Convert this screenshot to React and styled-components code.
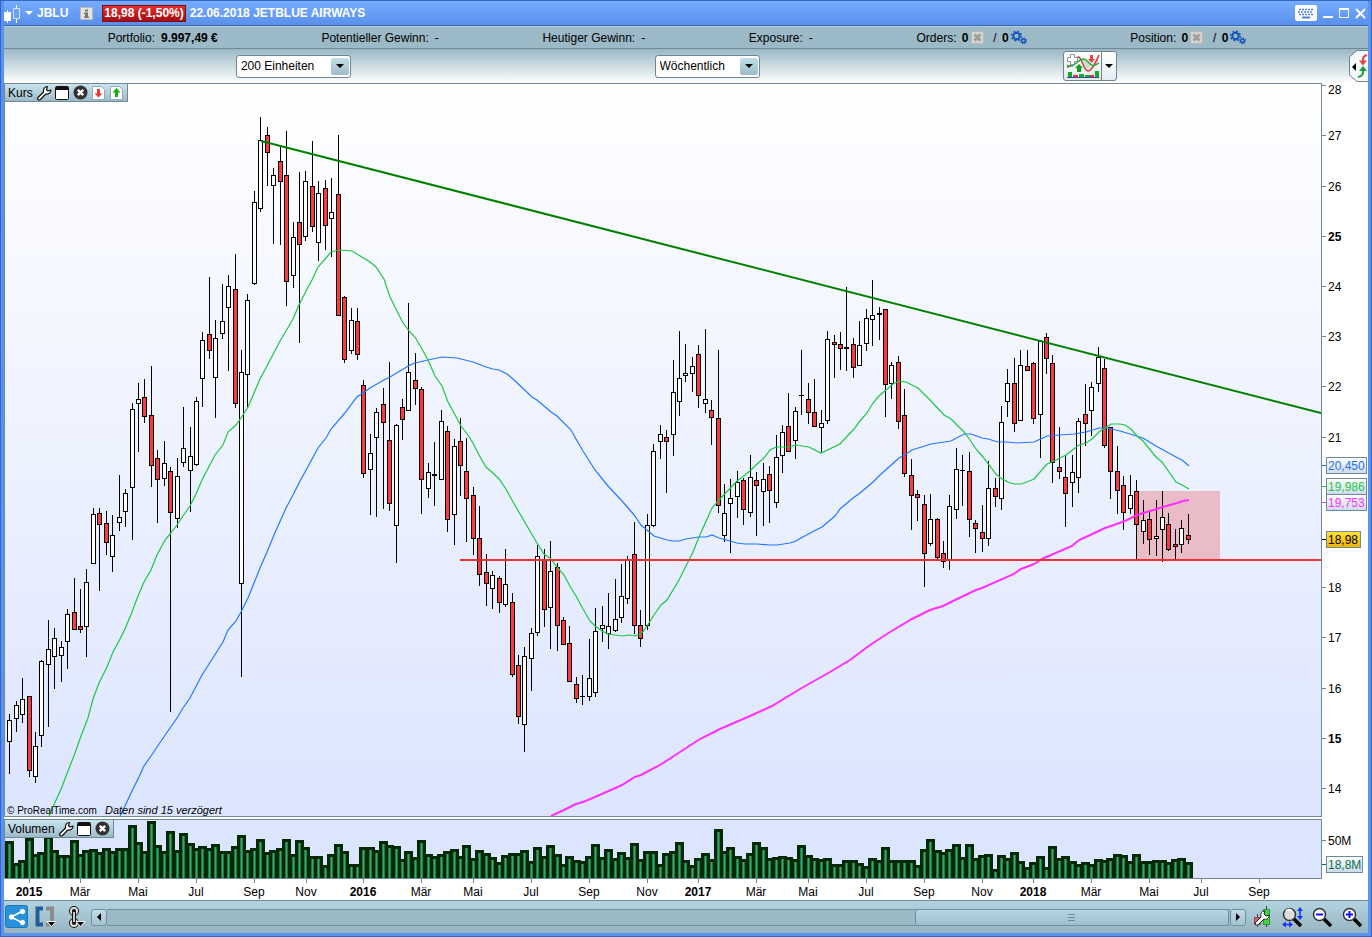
import React from 'react'
import styled, { createGlobalStyle } from 'styled-components'

const GlobalStyle = createGlobalStyle`
  body {
    margin: 0;
    font-family: "Liberation Sans", Arial, sans-serif;
    font-size: 12px;
    color: #000;
  }
  * {
    box-sizing: border-box;
  }
`

// high, body top, body bottom, low, rising (1) or falling (0)
const candles = [
  [714, 720, 742, 774, 1], [701, 705, 719, 732, 1], [678, 699, 715, 723, 1], [696, 696, 771, 777, 0],
  [732, 746, 777, 783, 1], [660, 661, 736, 747, 1], [620, 649, 665, 727, 1], [628, 638, 657, 689, 1],
  [641, 647, 656, 682, 1], [609, 614, 642, 669, 1], [578, 612, 630, 630, 0], [589, 626, 630, 633, 0],
  [569, 582, 627, 657, 1], [508, 514, 564, 564, 1], [508, 513, 525, 591, 0], [511, 523, 543, 555, 0],
  [515, 535, 557, 572, 1], [475, 517, 523, 531, 1], [489, 493, 512, 527, 1], [403, 409, 488, 540, 1],
  [383, 399, 404, 452, 1], [379, 397, 417, 423, 0], [366, 415, 466, 487, 0], [450, 458, 480, 523, 0],
  [441, 463, 479, 486, 1], [467, 471, 513, 712, 0], [458, 476, 519, 528, 1], [407, 448, 463, 467, 1],
  [427, 456, 471, 512, 1], [397, 401, 465, 466, 1], [332, 340, 379, 407, 1], [277, 334, 351, 359, 0],
  [320, 338, 378, 418, 1], [284, 321, 334, 339, 1], [275, 286, 308, 371, 1], [254, 289, 404, 408, 0],
  [350, 372, 584, 677, 1], [294, 300, 375, 407, 1], [191, 202, 284, 285, 1], [117, 140, 209, 212, 1],
  [127, 135, 153, 186, 0], [168, 175, 186, 244, 1], [146, 161, 182, 245, 0], [131, 175, 282, 306, 0],
  [222, 237, 276, 288, 1], [172, 222, 245, 343, 0], [171, 181, 237, 241, 1], [141, 186, 227, 232, 0],
  [181, 193, 243, 261, 1], [180, 188, 226, 250, 0], [178, 212, 219, 257, 1], [135, 194, 316, 316, 0],
  [296, 297, 360, 363, 0], [308, 320, 351, 354, 1], [308, 321, 355, 360, 0], [380, 385, 474, 478, 0],
  [434, 453, 470, 515, 1], [408, 412, 438, 517, 1], [388, 404, 423, 509, 0], [362, 440, 504, 511, 0],
  [424, 425, 526, 563, 1], [399, 407, 420, 440, 0], [303, 372, 411, 411, 1], [353, 380, 389, 405, 0],
  [387, 389, 480, 514, 0], [463, 472, 489, 498, 1], [442, 474, 476, 506, 1], [410, 421, 480, 480, 1],
  [426, 431, 520, 532, 0], [439, 446, 515, 545, 1], [418, 441, 466, 496, 0], [438, 471, 499, 542, 0],
  [487, 495, 539, 555, 0], [506, 538, 575, 586, 0], [554, 572, 584, 606, 0], [571, 575, 589, 609, 1],
  [576, 578, 603, 613, 0], [549, 584, 605, 607, 1], [593, 602, 675, 677, 0], [655, 665, 717, 724, 0],
  [647, 656, 725, 752, 1], [628, 633, 659, 691, 1], [545, 556, 633, 636, 1], [549, 559, 610, 627, 0],
  [541, 571, 608, 649, 1], [563, 567, 626, 651, 0], [617, 620, 645, 645, 0], [626, 643, 682, 682, 0],
  [677, 684, 699, 703, 0], [675, 696, 697, 705, 1], [639, 678, 697, 701, 1], [608, 631, 693, 697, 1],
  [606, 625, 629, 642, 1], [593, 626, 634, 649, 1], [579, 619, 631, 632, 1], [564, 596, 618, 623, 1],
  [556, 559, 599, 604, 1], [522, 554, 626, 634, 0], [610, 625, 639, 647, 0], [514, 525, 626, 630, 1],
  [444, 451, 526, 527, 1], [425, 434, 442, 459, 1], [430, 437, 442, 493, 0], [360, 392, 435, 456, 1],
  [331, 378, 402, 416, 1], [344, 373, 376, 382, 1], [357, 366, 374, 392, 1], [345, 354, 396, 408, 0],
  [329, 399, 404, 413, 1], [400, 410, 418, 445, 0], [350, 418, 506, 513, 0], [484, 513, 536, 542, 1],
  [479, 498, 504, 553, 1], [471, 482, 497, 518, 1], [478, 480, 510, 525, 0], [455, 477, 513, 517, 1],
  [472, 480, 486, 536, 0], [463, 479, 492, 526, 1], [466, 474, 491, 523, 0], [435, 457, 503, 508, 1],
  [425, 432, 456, 473, 1], [393, 426, 452, 452, 0], [407, 411, 441, 459, 1], [350, 395, 396, 415, 1],
  [383, 399, 413, 424, 0], [379, 412, 427, 427, 0], [410, 423, 428, 453, 1], [331, 339, 421, 424, 1],
  [335, 342, 345, 378, 0], [332, 344, 349, 370, 0], [287, 347, 349, 371, 1], [338, 344, 368, 378, 0],
  [321, 345, 366, 366, 1], [309, 318, 344, 351, 1], [280, 315, 320, 346, 1], [307, 313, 315, 340, 1],
  [309, 309, 385, 417, 0], [362, 365, 384, 399, 1], [356, 362, 422, 429, 0], [389, 415, 474, 477, 0],
  [459, 475, 496, 530, 0], [490, 494, 498, 521, 0], [495, 504, 554, 587, 0], [494, 519, 544, 546, 1],
  [518, 519, 558, 559, 0], [541, 553, 562, 568, 0], [495, 506, 560, 570, 1], [448, 469, 510, 519, 1],
  [455, 470, 471, 506, 1], [452, 471, 520, 537, 0], [520, 523, 529, 553, 0], [505, 532, 539, 552, 0],
  [461, 488, 539, 546, 1], [478, 488, 497, 507, 0], [406, 422, 499, 510, 1], [369, 383, 402, 417, 1],
  [358, 383, 424, 432, 0], [350, 365, 421, 421, 1], [350, 366, 371, 371, 0], [362, 363, 419, 424, 0],
  [340, 341, 415, 458, 1], [333, 337, 359, 374, 0], [355, 363, 463, 483, 0], [427, 467, 472, 479, 0],
  [455, 477, 494, 527, 0], [455, 472, 483, 507, 1], [418, 421, 478, 493, 1], [384, 414, 424, 446, 0],
  [382, 387, 411, 436, 1], [347, 357, 384, 392, 1], [359, 368, 446, 448, 0], [427, 427, 472, 499, 0],
  [446, 471, 491, 514, 0], [476, 485, 513, 530, 0], [475, 495, 509, 514, 1], [480, 491, 525, 559, 0],
  [500, 520, 532, 544, 1], [510, 519, 540, 555, 0], [500, 536, 539, 556, 1], [491, 517, 530, 562, 1],
  [513, 524, 550, 551, 0], [529, 544, 547, 559, 0], [520, 528, 545, 553, 1], [514, 535, 540, 544, 0],
]

const volumes = [
  841, 863, 860, 838, 854, 852, 836, 850, 855, 855, 840, 854, 850, 849, 852, 848, 851, 848, 848, 825,
  842, 851, 821, 845, 851, 831, 850, 833, 843, 848, 846, 848, 844, 851, 851, 846, 835, 850, 848, 839,
  852, 850, 848, 839, 854, 840, 847, 856, 856, 865, 854, 844, 851, 864, 864, 847, 847, 850, 841, 845,
  846, 859, 851, 857, 840, 854, 856, 854, 851, 849, 856, 845, 858, 850, 853, 857, 862, 855, 853, 853,
  850, 861, 847, 856, 845, 854, 864, 856, 860, 861, 856, 844, 857, 849, 858, 852, 857, 843, 859, 851,
  851, 864, 853, 851, 842, 860, 865, 858, 853, 859, 829, 851, 847, 856, 859, 853, 842, 847, 858, 857,
  856, 857, 859, 845, 855, 858, 859, 858, 864, 864, 860, 860, 863, 866, 858, 860, 847, 860, 860, 860,
  860, 865, 849, 839, 850, 852, 849, 844, 857, 844, 858, 855, 854, 869, 855, 858, 852, 861, 867, 862,
  856, 867, 846, 858, 856, 861, 864, 862, 864, 859, 860, 858, 854, 855, 861, 854, 861, 861, 860, 860,
  862, 859, 858, 862,
]

const fastAverage =
  '49,816 52,809 62,787 68,771 75,753 81,736 88,718 93,699 99,683 107,667 113,652 119,641 125,629 132,612 138,596 144,582 151,570 157,555 165,540 170,534 177,525 183,516 190,506 196,494 202,480 215,455 223,445 228,432 236,425 241,418 248,407 254,393 260,379 267,366 280,341 286,331 293,319 299,305 306,291 312,280 318,267 326,258 331,252 339,250 352,251 357,254 370,262 376,267 384,279 390,297 396,309 403,323 410,332 415,337 422,349 428,360 435,376 442,386 448,402 454,413 461,426 468,435 473,443 479,455 486,467 493,473 499,479 506,489 513,502 537,543 544,554 551,559 557,567 564,575 571,588 576,596 583,609 590,621 595,626 602,631 608,634 615,635 622,636 629,635 635,636 641,634 647,626 654,615 661,605 667,600 679,580 687,564 693,552 699,537 712,508 719,500 737,481 745,475 751,470 756,465 764,458 770,450 776,447 783,447 789,447 795,445 809,447 821,453 840,444 854,429 860,421 867,413 873,403 879,396 886,390 893,384 899,381 906,382 912,385 918,388 931,401 944,415 951,419 957,425 964,432 970,440 976,449 983,457 996,474 1002,479 1008,482 1014,484 1021,484 1027,482 1034,479 1047,464 1054,461 1066,455 1079,445 1086,443 1092,439 1099,432 1105,428 1111,424 1120,424 1125,425 1131,429 1137,436 1143,441 1156,457 1162,462 1176,482 1182,485 1189,489'

const slowAverage =
  '120,816 124,808 132,791 139,777 144,766 151,756 157,747 170,728 177,718 183,708 190,698 202,675 223,642 228,630 236,621 241,612 248,598 254,583 260,568 267,552 274,535 286,508 293,495 299,483 318,448 326,438 331,429 344,414 357,397 370,388 384,380 390,377 410,365 415,363 428,360 442,357 457,358 473,362 486,367 493,369 499,370 507,374 513,379 532,397 537,400 551,412 557,416 571,430 576,439 583,451 595,470 608,486 622,501 629,509 635,516 641,525 654,536 667,540 673,541 679,541 686,539 699,537 706,537 712,535 719,538 737,543 745,544 757,544 770,545 777,545 790,543 796,541 801,538 814,531 822,527 835,516 840,509 853,498 860,493 873,482 880,475 899,458 906,454 912,450 931,444 951,441 964,434 971,434 982,438 988,439 998,442 1007,442 1017,443 1034,442 1047,436 1060,435 1074,434 1086,432 1099,428 1107,428 1120,431 1143,438 1156,446 1176,457 1182,460 1189,466'

const longAverage =
  '551,816 564,810 576,804 583,802 595,797 622,785 635,777 641,775 660,765 680,752 700,739 720,729 750,716 772,706 800,689 830,672 850,660 870,645 890,632 912,619 930,610 943,606 955,600 976,590 982,588 1014,574 1021,569 1034,564 1042,559 1072,546 1079,540 1086,537 1105,528 1111,526 1125,521 1137,515 1150,511 1163,507 1177,503 1183,501 1189,500'

const months = [
  [29, '2015'], [80, 'Mär'], [138, 'Mai'], [196, 'Jul'], [254, 'Sep'], [306, 'Nov'],
  [363, '2016'], [421, 'Mär'], [473, 'Mai'], [531, 'Jul'], [589, 'Sep'], [647, 'Nov'],
  [698, '2017'], [756, 'Mär'], [808, 'Mai'], [866, 'Jul'], [924, 'Sep'], [982, 'Nov'],
  [1033, '2018'], [1091, 'Mär'], [1149, 'Mai'], [1201, 'Jul'], [1259, 'Sep'],
]

const prices = [28, 27, 26, 25, 24, 23, 22, 21, 18, 17, 16, 15, 14]

const barX = i => Math.floor(9.7 + 6.44 * i)
const priceY = p => Math.round(789 - (p - 14) * 50.2)

const Window = styled.main`
  display: flex;
  flex-direction: column;
  padding: 1px 4px 4px;
  background: #5a93ef;
  box-shadow: inset 0 0 0 1px #3467c2;
`

const TitleBar = styled.header`
  display: flex;
  align-items: center;
  height: 25px;
  padding-right: 2px;
  border-bottom: 1px solid #3c68b0;
  background: linear-gradient(#76adff, #5890ec);
  color: #fff;
  font-weight: bold;
  white-space: nowrap;
`

const TitleButton = styled.button`
  display: flex;
  padding: 0;
  border: 0;
  background: none;
  color: inherit;
  font: inherit;
  margin-left: ${p => p.$before || 0}px;
`

const Symbol = styled.span`
  margin-left: 4px;
`

const Change = styled.span`
  height: 17px;
  margin: 0 4px 0 9px;
  padding: 0 1px;
  border: 1px solid #7c1010;
  background: linear-gradient(#e03030, #a80c0c);
  line-height: 15px;
`

const Spacer = styled.div`
  flex: 1;
`

const StatusBar = styled.section`
  display: flex;
  justify-content: space-evenly;
  align-items: center;
  height: 23px;
  padding-right: 18px;
  border-top: 1px solid #b4ccd6;
  border-bottom: 1px solid #6f8a96;
  background: #9bb9c6;
  white-space: nowrap;
`

const StatusItem = styled.div`
  display: flex;
  align-items: center;
  gap: ${p => p.$gap || 6}px;
`

const SmallButton = styled.button`
  display: flex;
  padding: 0;
  border: 0;
  background: none;
`

const Toolbar = styled.section`
  display: flex;
  align-items: center;
  height: 34px;
  background: linear-gradient(#9ab8c4, #fff);
`

const Controls = styled.div`
  display: flex;
  flex: 1;
  justify-content: space-between;
  align-items: center;
  padding: 0 17%;
`

const SelectBox = styled.label`
  display: grid;
  grid-template-columns: 1fr 22px;
  align-items: center;
  width: ${p => p.$width}px;
  height: 23px;
`

const Select = styled.select`
  grid-area: 1 / 1 / 2 / 3;
  height: 23px;
  padding: 0 4px;
  appearance: none;
  border: 1px solid #70858f;
  border-radius: 3px;
  background: #fff;
  color: #000;
  font: inherit;
`

const SelectArrow = styled.span`
  grid-area: 1 / 2 / 2 / 3;
  display: flex;
  justify-content: center;
  align-items: center;
  width: 18px;
  height: 17px;
  margin-left: 2px;
  border-radius: 2px;
  background: linear-gradient(#c4dee8, #9dbcc9);
  pointer-events: none;
`

const SplitButton = styled.div`
  display: flex;
  height: 30px;
  border: 1px solid #70858f;
  border-radius: 3px;
  background: linear-gradient(#fff, #e4ecf0);
`

const SplitPart = styled.button`
  display: flex;
  justify-content: center;
  align-items: center;
  width: ${p => p.$width}px;
  padding: 0;
  border: 0;
  border-left: ${p => (p.$divided ? '1px solid #70858f' : '0')};
  background: none;
`

const Panel = styled.section`
  position: relative;
  background: #fff;
`

const PanelTitle = styled.div`
  position: absolute;
  top: 1px;
  left: 1px;
  display: flex;
  align-items: center;
  gap: 3px;
  height: 18px;
  padding: 0 3px;
  border-right: 1px solid #6f8a96;
  border-bottom: 1px solid #6f8a96;
  background: linear-gradient(#c9e4ef, #9dbbc7);
`

const Chart = styled.svg`
  display: block;
  width: 100%;
  height: auto;
  font-family: "Liberation Sans", Arial, sans-serif;
  font-size: 12px;
`

const Footer = styled.footer`
  display: flex;
  align-items: center;
  height: 33px;
  padding-right: 5px;
  border-top: 1px solid #6f8a96;
  background: linear-gradient(#b3d3e0, #97b5c1);
`

const FooterButton = styled.button`
  display: flex;
  padding: 0;
  border: 0;
  background: none;
  margin-left: ${p => p.$before}px;
`

const ScrollBar = styled.div`
  display: flex;
  flex: 1;
  height: 17px;
  margin-left: 5px;
`

const ScrollStep = styled.button`
  display: flex;
  justify-content: center;
  align-items: center;
  width: 16px;
  padding: 0;
  border: 1px solid #70909e;
  border-radius: 3px;
  background: linear-gradient(#c2dce7, #a3c2cf);
`

const ScrollTrack = styled.div`
  display: flex;
  justify-content: flex-end;
  flex: 1;
  border-top: 1px solid #70909e;
  border-bottom: 1px solid #70909e;
  background: #9cbac6;
`

const ScrollThumb = styled.div`
  display: flex;
  justify-content: center;
  align-items: center;
  width: 28%;
  margin-right: 1px;
  border: solid #70909e;
  border-width: 0 1px;
  border-radius: 3px;
  background: linear-gradient(#b6d6e3, #9fbfcc);
`

const Arrow = ({ d = 'M0 0h8L4 4z', w = 8, h = 4, fill = '#000' }) => (
  <svg width={w} height={h} fill={fill}><path d={d} /></svg>
)

const InfoIcon = () => (
  <svg width="13" height="13">
    <rect x="0.5" y="0.5" width="12" height="12" fill="#e4e4dc" stroke="#b4b8b8" />
    <path d="M5 2.500h3v2H5zM4 5.500h4v4h1v1.500H4V9.500h1V7H4z" fill="#777" />
  </svg>
)

const Wrench = () => (
  <svg width="16" height="16" viewBox="0 0 16 16">
    <path d="M2 12.500 7.500 7C7 4 8.500 1.500 11.500 1.500L10.500 4.500 12 6 15 5C15 8 12.500 9.500 9.800 9L4.500 14.500Q3 15.500 2 14.500T2 12.500Z" fill="#fff" stroke="#111" strokeWidth="1.2" strokeLinejoin="round" />
  </svg>
)

const WindowIcon = () => (
  <svg width="15" height="14">
    <rect x="0.5" y="0.5" width="13" height="13" rx="1" fill="#fff" stroke="#111" />
    <path d="M1 1h12v3H1z" fill="#111" />
  </svg>
)

const CloseIcon = () => (
  <svg width="15" height="15">
    <circle cx="7.5" cy="7.5" r="7" fill="#333" />
    <path d="M4.800 4.800l5.400 5.400M10.200 4.800l-5.400 5.400" stroke="#fff" strokeWidth="2.4" />
  </svg>
)

const MoveIcon = ({ up }) => (
  <svg width="15" height="14">
    <path d="M1.500 .5h9l3 3v10h-12z" fill="#fff" stroke="#8eaabb" />
    <path d={up ? 'M7.500 2l4 4.500H9V11H6V6.500H3.500z' : 'M7.500 11.500l-4-4H6V3h3v4.500h2.500z'} fill={up ? '#14b014' : '#ee3838'} />
  </svg>
)

const CancelIcon = () => (
  <svg width="14" height="14">
    <rect x="0.5" y="0.5" width="12" height="12" fill="#d4d4d0" stroke="#bbb8b4" />
    <path d="M3.500 3.500l6 6M9.500 3.500l-6 6" stroke="#a09c98" strokeWidth="3" />
  </svg>
)

const Gears = () => (
  <svg width="16" height="15" fill="none" stroke="#1555b8">
    <circle cx="5.5" cy="6" r="3.2" strokeWidth="2" />
    <circle cx="5.5" cy="6" r="4.8" strokeWidth="1.5" strokeDasharray="1.9 1.87" />
    <circle cx="12.5" cy="10.8" r="1.8" strokeWidth="1.5" />
    <circle cx="12.5" cy="10.8" r="2.9" strokeWidth="1.2" strokeDasharray="1.1 1.18" />
  </svg>
)

const CandleLogo = () => (
  <svg width="17" height="24" fill="none" stroke="#fff">
    <path d="M3.500 9v13M12.500 4v18" />
    <path d="M0 11h7v9H0z" fill="#fff" stroke="none" />
    <path d="M9.500 7.500h6v10h-6z" fill="#6ba2f8" stroke="#d4e5ff" />
  </svg>
)

const Keyboard = () => (
  <svg width="22" height="16">
    <rect width="22" height="16" rx="2" fill="#fff" />
    <path d="M4 4.500h15M3 7h15M4 9.500h15" stroke="#4d80d5" strokeWidth="1.5" strokeDasharray="2 1" />
    <path d="M7 12.500h8" stroke="#4d80d5" strokeWidth="2" />
  </svg>
)

const IndicatorIcon = () => (
  <svg width="34" height="26" fill="none">
    <path d="M12 5l4 3 5 9 4-4-5-6-4-1z" fill="#bfe6c8" />
    <path d="M24 16l8-14v9l-6 5z" fill="#f3c4c8" />
    <path d="M1 14Q4 14 7 9T13 4C17 8 18 18 22 18S30 9 33 2" stroke="#d43c3c" strokeWidth="1.5" />
    <path d="M1 12C8 17 12 5 18 6S23 17 33 10" stroke="#25ad3b" strokeWidth="1.5" />
    <path d="M4.500 1.500h4v3h3v4h-3v3h-4v-3h-3v-4h3z" fill="#fff" stroke="#8296a0" />
    <path d="M13 11l4 4h-2v4h-4v-4H9z" fill="#129c20" />
    <path d="M24 2h3v4h2l-3.500 4L22 6h2z" fill="#e44" />
    <path d="M2 24v-5h4v5zM13 24v-3h5v3zM19 24v-2h5v2zM29 24v-6h4v6z" fill="#13ab20" />
    <path d="M7 24v-2h5v2zM24 24v-2h4v2z" fill="#dd3434" />
    <path d="M1 24.500h32" stroke="#3344bb" />
  </svg>
)

const SideTab = () => (
  <svg width="19" height="32" fill="none">
    <path d="M19 .5H8L.5 7v18L8 31.500h11" fill="#f5fafc" stroke="#70858f" />
    <path d="M7 13v8l-4-4z" fill="#000" />
    <path d="M18 5q-5 1-4 7" stroke="#e44545" strokeWidth="2" />
    <path d="M10 10.500h8l-4 5z" fill="#e44545" />
    <path d="M9 27q6-1 5-7" stroke="#19a034" strokeWidth="2" />
    <path d="M10 21h8l-4-5z" fill="#19a034" />
  </svg>
)

const ShareIcon = () => (
  <svg width="24" height="24" fill="#fff" stroke="#fff">
    <rect x="0.5" y="0.5" width="22" height="22" rx="2" fill="#2791db" stroke="#1877b6" />
    <path d="M6 12l12-6M6 12l12 6" fill="none" strokeWidth="1.5" />
    <circle cx="6.5" cy="12" r="2.2" />
    <circle cx="17.5" cy="6.5" r="2.2" />
    <circle cx="17.5" cy="17.5" r="2.2" />
  </svg>
)

const BracketIcon = () => (
  <svg width="22" height="22" fill="none">
    <path d="M8 2.500H2.500v16H8" stroke="#205e99" strokeWidth="4" />
    <path d="M11 2.500h6v16h-6" stroke="#8c8c8c" strokeWidth="4" />
    <path d="M12 15.500h9l-4.500 5z" fill="#000" stroke="#fff" />
  </svg>
)

const ChainIcon = () => (
  <svg width="18" height="22" fill="none">
    <g stroke="#111" strokeWidth="4">
      <circle cx="6" cy="5" r="3" />
      <circle cx="6" cy="17" r="3" />
    </g>
    <g stroke="#ddd" strokeWidth="2">
      <circle cx="6" cy="5" r="3" />
      <circle cx="6" cy="17" r="3" />
    </g>
    <path d="M6 6v10" stroke="#111" strokeWidth="4" strokeLinecap="round" />
    <path d="M6 6v10" stroke="#ccc" strokeWidth="2" />
    <path d="M8 15.500h9l-4.500 5z" fill="#000" stroke="#fff" />
  </svg>
)

const ChartSettings = () => (
  <svg width="20" height="22">
    <path d="M4.500 8v13M13.500 0v21" stroke="#444" />
    <path d="M1.500 11.500h6v7h-6z" fill="#c66" stroke="#844" />
    <path d="M10.500 3.500h6v15h-6z" fill="#48d048" stroke="#269c30" />
    <path d="M2 17l6-6c-1-4 1-6 4-6l-1 3 2 2 3-1c0 4-3 5-5 4l-6 6q-3 1-3-2z" fill="#fff" stroke="#222" />
  </svg>
)

const Magnifier = ({ sign }) => (
  <svg width="21" height="21">
    <path d="M12 12l7 7" stroke="#000" strokeWidth="3.5" />
    <circle cx="7.5" cy="7.5" r="6" fill={sign ? '#fff' : '#ddd'} stroke="#333" strokeWidth="1.5" />
    {sign && <path d={sign === '+' ? 'M4 7.500h7M7.500 4v7' : 'M4 7.500h7'} stroke="#1111ff" strokeWidth="2" />}
    {!sign && <path d="M4 4q3-3 6 0" fill="none" stroke="#fff" strokeWidth="2" />}
    {!sign && <path d="M18 3v7M1 17.500h8" stroke="#1833ff" strokeWidth="1.5" />}
    {!sign && <path d="M18 0l3 4h-6zM18 13l3-4h-6zM0 17.500l4-3v6zM11 17.500l-4-3v6z" fill="#1833ff" />}
  </svg>
)

const PriceTag = ({ y, width = 41, color, text, gold }) => (
  <g>
    <path d={`M1322 ${y + 8.5}h4`} stroke={color} />
    <rect x="1326.5" y={y + 0.5} width={width - 1} height="16" fill={gold ? 'url(#gold)' : 'url(#tag)'} stroke="#6f8a96" />
    <text x="1328" y={y + 13} fill={color}>{text}</text>
  </g>
)

const Candle = ({ x, data: [high, top, bottom, low, up] }) => (
  <g shapeRendering="crispEdges">
    <rect x={x} y={high} width="1" height={low - high} />
    <rect x={x - 2} y={top} width="5" height={bottom - top} />
    {bottom - top > 2 && (
      <rect x={x - 1} y={top + 1} width="3" height={bottom - top - 2} fill={up ? '#fff' : '#fb3a3c'} />
    )}
  </g>
)

const PriceChart = () => (
  <Chart viewBox="4 83 1364 736" role="img" aria-label="Kurs JBLU">
    <defs>
      <linearGradient id="sky" x1="0" y1="0" x2="0" y2="1">
        <stop offset="0" stopColor="#fff" />
        <stop offset="1" stopColor="#dce5ff" />
      </linearGradient>
      <linearGradient id="tag" x1="0" y1="0" x2="0" y2="1">
        <stop offset="0" stopColor="#fff" />
        <stop offset="1" stopColor="#ccd9ee" />
      </linearGradient>
      <linearGradient id="gold" x1="0" y1="0" x2="0" y2="1">
        <stop offset="0" stopColor="#ffe234" />
        <stop offset="1" stopColor="#f4b400" />
      </linearGradient>
      <clipPath id="plot"><path d="M5 84h1316v732H5z" /></clipPath>
    </defs>
    <rect x="4.5" y="83.5" width="1317" height="733" fill="url(#sky)" stroke="#6f8a96" />
    <path d="M1136 491h84v68h-84z" fill="#e9bcc8" />
    {candles.map((c, i) => <Candle key={i} x={barX(i)} data={c} />)}
    <g fill="none" clipPath="url(#plot)">
      <polyline points={slowAverage} stroke="#2478ff" strokeWidth="1.2" />
      <polyline points={fastAverage} stroke="#1cc842" strokeWidth="1.2" />
      <polyline points={longAverage} stroke="#ff30ff" strokeWidth="2" />
      <path d="M261 141 1321 413" stroke="#008000" strokeWidth="2" />
      <path d="M460 560H1321" stroke="#ee3030" strokeWidth="2" />
    </g>
    <text x="7" y="814" fontSize="10">© ProRealTime.com</text>
    <text x="105" y="814" fontSize="11" fontStyle="italic">Daten sind 15 verzögert</text>
    {prices.map(p => (
      <g key={p}>
        <path d={`M1322 ${priceY(p) - 0.5}h4`} stroke="#6f8a96" />
        <text x="1328" y={Math.max(priceY(p) + 4, 94)} fontWeight={p % 5 ? 'normal' : 'bold'}>{p}</text>
      </g>
    ))}
    <PriceTag y={457} color="#1d72f2" text="20,450" />
    <PriceTag y={478} color="#1cc842" text="19,986" />
    <PriceTag y={494} color="#ff30ff" text="19,753" />
    <PriceTag y={531} width={35} color="#000" text="18,98" gold />
  </Chart>
)

const VolumeChart = () => (
  <Chart viewBox="4 819 1364 81" role="img" aria-label="Volumen JBLU">
    <rect x="4.5" y="819.5" width="1317" height="59" fill="#dce5ff" stroke="#6f8a96" />
    <g shapeRendering="crispEdges">
      {volumes.map((y, i) => <rect key={i} x={barX(i) - 4} y={y} width="9" height={878 - y} fill="#032a05" />)}
      {volumes.map((y, i) => (
        <g key={i}>
          <rect x={barX(i) - 1} y={y + 3} width="3" height={875 - y} fill="#1b7a4a" />
          <rect x={barX(i)} y={y + 3} width="1" height={875 - y} fill="#3da371" />
        </g>
      ))}
    </g>
    {months.map(([x, label]) => (
      <g key={x}>
        <path d={`M${x + 0.5} 879v4`} stroke="#6f8a96" />
        <text x={x} y="896" textAnchor="middle" fontWeight={label[0] === '2' ? 'bold' : 'normal'}>{label}</text>
      </g>
    ))}
    <path d="M1322 840.500h4" stroke="#6f8a96" />
    <text x="1328" y="845">50M</text>
    <PriceTag y={856} width={37} color="#0b7048" text="18,8M" />
  </Chart>
)

const Positions = ({ label }) => (
  <StatusItem $gap={2}>
    <span>{label}:&nbsp;</span>
    <b>0</b>
    <SmallButton aria-label={`${label} löschen`}><CancelIcon /></SmallButton>
    <span>&nbsp;&nbsp;/</span>
    <b>&nbsp;0</b>
    <SmallButton aria-label={`${label} Optionen`}><Gears /></SmallButton>
  </StatusItem>
)

const Dropdown = ({ label, value, width }) => (
  <SelectBox $width={width}>
    <Select aria-label={label} defaultValue={value}>
      <option>{value}</option>
    </Select>
    <SelectArrow><Arrow /></SelectArrow>
  </SelectBox>
)

const App = () => (
  <Window>
    <GlobalStyle />
    <TitleBar>
      <TitleButton aria-label="Diagrammtyp"><CandleLogo /></TitleButton>
      <TitleButton $before={4} aria-label="Wertpapier"><Arrow fill="#fff" /></TitleButton>
      <Symbol>JBLU</Symbol>
      <TitleButton $before={12} aria-label="Info"><InfoIcon /></TitleButton>
      <Change>18,98 (-1,50%)</Change>
      <span>22.06.2018 JETBLUE AIRWAYS</span>
      <Spacer />
      <TitleButton aria-label="Tastatur"><Keyboard /></TitleButton>
      <TitleButton $before={6} aria-label="Minimieren"><svg width="10" height="12"><path d="M0 10h10" stroke="#fff" strokeWidth="2" /></svg></TitleButton>
      <TitleButton $before={6} aria-label="Maximieren"><svg width="11" height="11" fill="none" stroke="#fff"><path d="M.5.5h9v9h-9zM0 1.500h10" /></svg></TitleButton>
      <TitleButton $before={5} aria-label="Schließen"><svg width="11" height="11"><path d="M1 1l9 9M10 1l-9 9" stroke="#fff" strokeWidth="2" /></svg></TitleButton>
    </TitleBar>
    <StatusBar>
      <StatusItem><span>Portfolio:</span><b>9.997,49 €</b></StatusItem>
      <StatusItem><span>Potentieller Gewinn:</span><span>-</span></StatusItem>
      <StatusItem><span>Heutiger Gewinn:</span><span>-</span></StatusItem>
      <StatusItem><span>Exposure:</span><span>-</span></StatusItem>
      <Positions label="Orders" />
      <Positions label="Position" />
    </StatusBar>
    <Toolbar>
      <Controls>
        <Dropdown label="Einheiten" value="200 Einheiten" width={115} />
        <Dropdown label="Zeitrahmen" value="Wöchentlich" width={105} />
        <SplitButton>
          <SplitPart $width={37} aria-label="Indikatoren"><IndicatorIcon /></SplitPart>
          <SplitPart $width={15} $divided aria-label="Mehr Indikatoren"><Arrow /></SplitPart>
        </SplitButton>
      </Controls>
      <SmallButton aria-label="Handel einblenden"><SideTab /></SmallButton>
    </Toolbar>
    <Panel>
      <PriceChart />
      <PanelTitle>
        <span>Kurs</span>
        <SmallButton aria-label="Einstellungen"><Wrench /></SmallButton>
        <SmallButton aria-label="Fenster"><WindowIcon /></SmallButton>
        <SmallButton aria-label="Schließen"><CloseIcon /></SmallButton>
        <SmallButton aria-label="Nach unten"><MoveIcon /></SmallButton>
        <SmallButton aria-label="Nach oben"><MoveIcon up /></SmallButton>
      </PanelTitle>
    </Panel>
    <Panel>
      <VolumeChart />
      <PanelTitle>
        <span>Volumen</span>
        <SmallButton aria-label="Einstellungen"><Wrench /></SmallButton>
        <SmallButton aria-label="Fenster"><WindowIcon /></SmallButton>
        <SmallButton aria-label="Schließen"><CloseIcon /></SmallButton>
      </PanelTitle>
    </Panel>
    <Footer>
      <FooterButton $before={1} aria-label="Teilen"><ShareIcon /></FooterButton>
      <FooterButton $before={6} aria-label="Bereich"><BracketIcon /></FooterButton>
      <FooterButton $before={11} aria-label="Verknüpfen"><ChainIcon /></FooterButton>
      <ScrollBar>
        <ScrollStep aria-label="Zurück"><Arrow d="M4 0v8L0 4z" w={4} h={8} /></ScrollStep>
        <ScrollTrack>
          <ScrollThumb>
            <svg width="7" height="7" stroke="#6d8d9b"><path d="M0 .5h7M0 3.500h7M0 6.500h7" /></svg>
          </ScrollThumb>
        </ScrollTrack>
        <ScrollStep aria-label="Weiter"><Arrow d="M0 0v8l4-4z" w={4} h={8} /></ScrollStep>
      </ScrollBar>
      <FooterButton $before={7} aria-label="Diagramm einstellen"><ChartSettings /></FooterButton>
      <FooterButton $before={9} aria-label="Anpassen"><Magnifier /></FooterButton>
      <FooterButton $before={9} aria-label="Verkleinern"><Magnifier sign="-" /></FooterButton>
      <FooterButton $before={9} aria-label="Vergrößern"><Magnifier sign="+" /></FooterButton>
    </Footer>
  </Window>
)

export default App
